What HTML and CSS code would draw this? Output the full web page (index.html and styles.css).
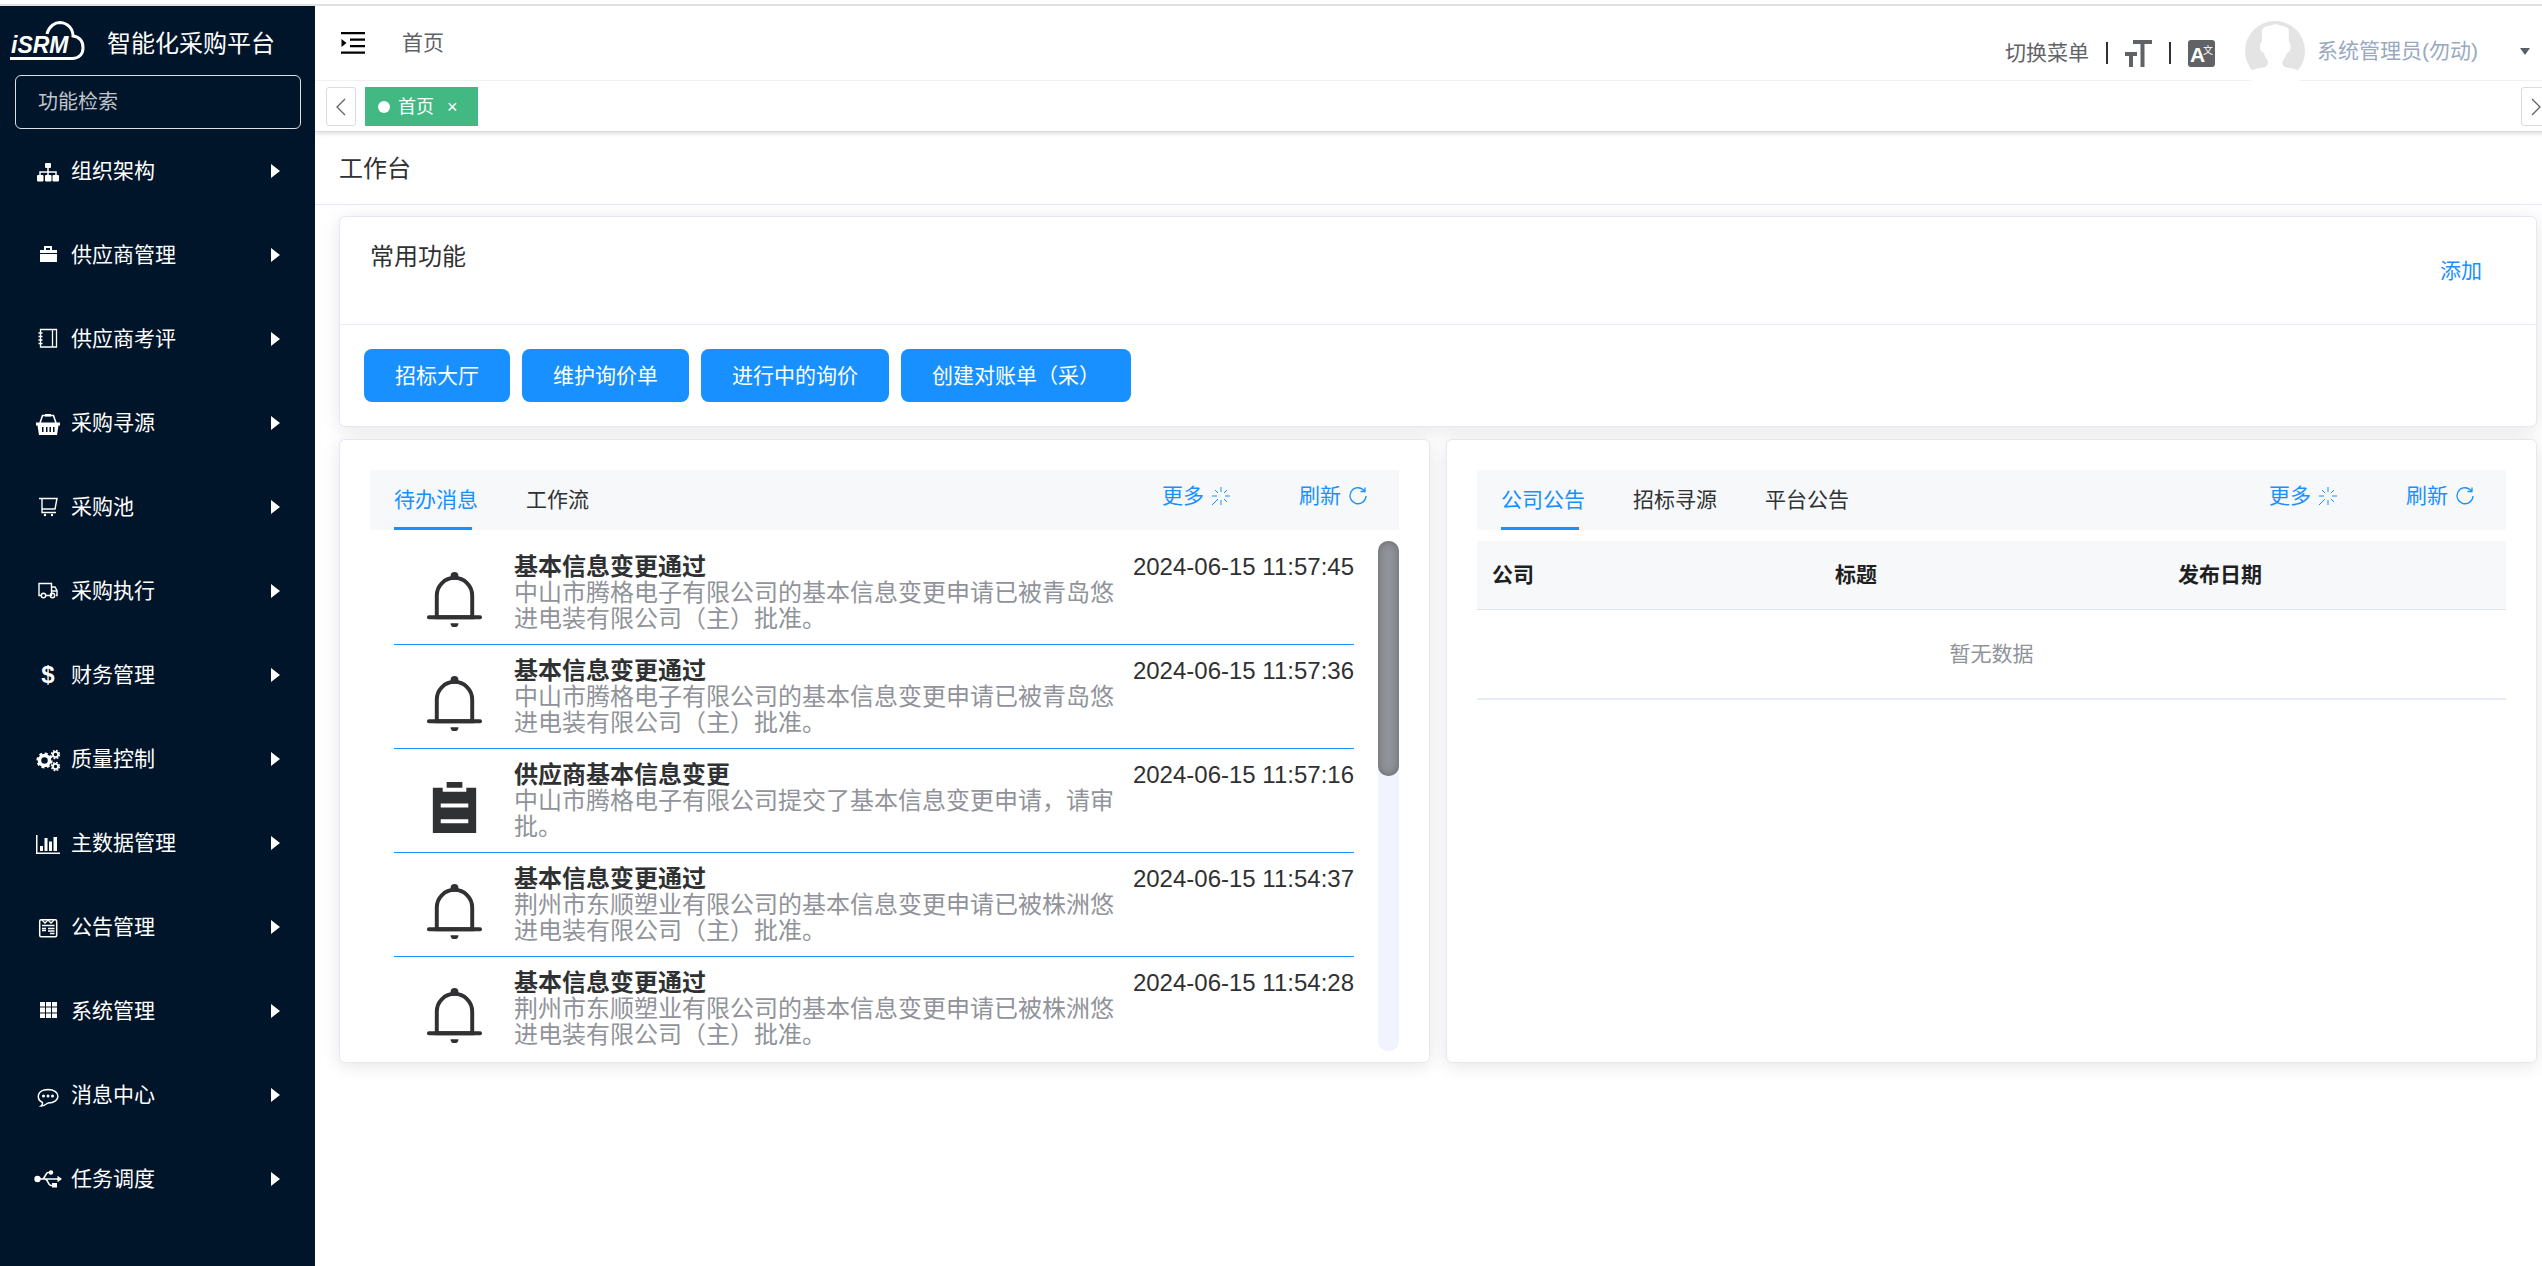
FILE: index.html
```html
<!DOCTYPE html>
<html lang="zh-CN">
<head>
<meta charset="utf-8">
<title>智能化采购平台</title>
<link rel="stylesheet" href="styles.css">
</head>
<body>
<svg class="sprite" aria-hidden="true">
  <symbol id="bell" viewBox="0 0 1024 1024"><path d="M512 64a64 64 0 0 1 64 64v64H448v-64a64 64 0 0 1 64-64z"/><path d="M256 768h512V448a256 256 0 1 0-512 0v320zm256-640a320 320 0 0 1 320 320v384H192V448a320 320 0 0 1 320-320z"/><path d="M96 768h832q32 0 32 32t-32 32H96q-32 0-32-32t32-32zm352 128h128a64 64 0 0 1-128 0z"/></symbol>
  <symbol id="clipboard" viewBox="0 0 1024 1024"><path d="M704 192h160v736H160V192h160v64h384v-64zM288 512h448v-64H288v64zm0 256h448v-64H288v64zm96-576V96h256v96H384z"/></symbol>
  <symbol id="more" viewBox="0 0 20 20"><path d="M10 1v5M10 14v5M1 10h5M14 10h5M4 4l3 3M13 7l3-3M13 13l3 3M1 19l6-6" fill="none" stroke="currentColor"/></symbol>
  <symbol id="refresh" viewBox="0 0 20 20"><path d="M18 10a8 8 0 1 1-3-6.500l2 2M17 1.500v4h-4.500" fill="none" stroke="currentColor" stroke-width="1.300"/></symbol>
</svg>
<div class="topline"></div>
<div class="layout">
  <aside class="sidebar">
    <div class="brand">
      <svg class="logo" viewBox="0 0 75 40"><path d="M37 13C39 5 45 1.500 50 1.500C58 2 63 8 63 15C70 16 73 20 73 27C73 33 69 37.500 62 37.500H0" fill="none" stroke="#fff" stroke-width="3"/><text x="1" y="32" class="logo-text">iSRM</text></svg>
      <span class="brand-name">智能化采购平台</span>
    </div>
    <input class="search" type="text" placeholder="功能检索" aria-label="功能检索">
    <nav>
      <ul class="menu">
        <li><a href="#"><svg viewBox="0 0 28 28"><rect x="11" y="6" width="6" height="5" rx="1"/><path d="M14 11v8M6 19v-4h16v4" fill="none" stroke="currentColor" stroke-width="1.500"/><rect x="3" y="18" width="6.500" height="6.500" rx="1"/><rect x="11" y="18" width="6.500" height="6.500" rx="1"/><rect x="18.500" y="18" width="6.500" height="6.500" rx="1"/></svg><span>组织架构</span><i></i></a></li>
        <li><a href="#"><svg viewBox="0 0 28 28"><path d="M6 12V9h4V5h8v4h5v3zM12 9h4V7h-4zM6 13h17v8H6z"/></svg><span>供应商管理</span><i></i></a></li>
        <li><a href="#"><svg viewBox="0 0 28 28"><path d="M6.500 4.500h16v17.500h-16zM18.500 4.500V22M4.500 8h4M4.500 11.500h4M4.500 15h4M4.500 18.500h4" fill="none" stroke="currentColor" stroke-width="1.300"/></svg><span>供应商考评</span><i></i></a></li>
        <li><a href="#"><svg viewBox="0 0 28 28"><path d="M6 14l2.500-7.500h11L22 14" fill="none" stroke="currentColor" stroke-width="1.600"/><path d="M11 5h6v2.500h-6zM2 13.500h24v3h-1.500L23 26H5L3.500 16.500H2zM8 18v5h1.500v-5zM12 18v5h1.500v-5zM15.500 18v5H17v-5zM19 18v5h1.500v-5z" fill-rule="evenodd"/></svg><span>采购寻源</span><i></i></a></li>
        <li><a href="#"><svg viewBox="0 0 28 28"><path d="M5 5.500h18L21 16H8V5.500M8 16v3.500h14" fill="none" stroke="currentColor" stroke-width="1.400"/><circle cx="11" cy="22" r="1.200"/><circle cx="18" cy="22" r="1.200"/></svg><span>采购池</span><i></i></a></li>
        <li><a href="#"><svg viewBox="0 0 28 28"><path d="M7 18.500H5V6.500h12.500v12H12M17.500 10h3.500l2 3.500v5h-1M18 14h5" fill="none" stroke="currentColor" stroke-width="1.400"/><circle cx="9.500" cy="18.500" r="2.200" fill="none" stroke="currentColor" stroke-width="1.400"/><circle cx="18.500" cy="18.500" r="2.200" fill="none" stroke="currentColor" stroke-width="1.400"/></svg><span>采购执行</span><i></i></a></li>
        <li><a href="#"><b class="dollar">$</b><span>财务管理</span><i></i></a></li>
        <li><a href="#"><svg viewBox="0 0 28 28"><g fill="none" stroke="currentColor"><circle cx="10.500" cy="15.500" r="5" stroke-width="3.500"/><circle cx="10.500" cy="15.500" r="7" stroke-width="2.200" stroke-dasharray="2.900 2.600"/><circle cx="21.500" cy="9.500" r="2.600" stroke-width="1.800"/><circle cx="21.500" cy="9.500" r="4" stroke-width="1.400" stroke-dasharray="1.800 1.340"/><circle cx="21.500" cy="21.500" r="2.600" stroke-width="1.800"/><circle cx="21.500" cy="21.500" r="4" stroke-width="1.400" stroke-dasharray="1.800 1.340"/></g></svg><span>质量控制</span><i></i></a></li>
        <li><a href="#"><svg viewBox="0 0 28 28"><path d="M2 6h1.500v17.500H26V25H2zM6 17h3v5H6zM10.500 9h3v13h-3zM15 12.500h3V22h-3zM19.500 8h3.500v14h-3.500z"/></svg><span>主数据管理</span><i></i></a></li>
        <li><a href="#"><svg viewBox="0 0 28 28"><rect x="5.700" y="6.700" width="17" height="17" rx="1.500" fill="none" stroke="currentColor" stroke-width="1.500"/><path d="M8 7l3 3 3-3 3 3 3-3M8 12.500h12.500M8 15.500h4M14 15.500h6.500M14 18h6.500M16 20.500h4.500M8 17.500h4" fill="none" stroke="currentColor" stroke-width="1.300"/></svg><span>公告管理</span><i></i></a></li>
        <li><a href="#"><svg viewBox="0 0 28 28"><path d="M6 5h5v4.500H6zM12 5h5v4.500h-5zM18 5h5v4.500h-5zM6 10.500h5v5H6zM12 10.500h5v5h-5zM18 10.500h5v5h-5zM6 16.500h5V21H6zM12 16.500h5V21h-5zM18 16.500h5V21h-5z"/></svg><span>系统管理</span><i></i></a></li>
        <li><a href="#"><svg viewBox="0 0 28 28"><path d="M8.500 21.500C2 18 2.500 9 14 8.500c13 0 13.500 13.500 0 13.500q-4 3-7 3 2-1.500 1.500-3.500z" fill="none" stroke="currentColor" stroke-width="1.500"/><circle cx="9.500" cy="15" r="1.500"/><circle cx="14" cy="15" r="1.500"/><circle cx="18.500" cy="15" r="1.500"/></svg><span>消息中心</span><i></i></a></li>
        <li><a href="#"><svg viewBox="0 0 28 28"><circle cx="3.500" cy="14" r="3.200"/><circle cx="17" cy="7.500" r="2.200"/><path d="M18 18h5v4.500h-5zM23.500 10.800L28 14l-4.500 3.200z"/><path d="M4 14h20M8 14c3 0 3.500-6.500 6-6.500h3M11 14c3 0 3 6.500 6 6.500h2" fill="none" stroke="currentColor" stroke-width="1.600"/></svg><span>任务调度</span><i></i></a></li>
      </ul>
    </nav>
  </aside>
  <main class="main">
    <header class="header">
      <div class="crumbs">
        <button class="fold" aria-label="折叠菜单"><svg viewBox="0 0 24 22" width="24" height="22"><path d="M0 0h24v2.300H0zM9 6.500h15v2.300H9zM9 13h15v2.300H9zM0 19.500h24v2.300H0zM.5 7l5 4-5 4z"/></svg></button>
        <span>首页</span>
      </div>
      <div class="tools">
        <a href="#">切换菜单</a>
        <span class="bar"></span>
        <button aria-label="字号"><svg viewBox="0 0 27 27" width="27" height="27"><path d="M8 0h19v4h-7.500v23h-4V4H8zM0 12h12v4H8v11H4V16H0z"/></svg></button>
        <span class="bar"></span>
        <button class="lang" aria-label="语言"><svg viewBox="0 0 27 27" width="27" height="27"><rect width="27" height="27" rx="3"/><text x="2" y="22" class="lang-a">A</text><text x="15" y="14" class="lang-w">文</text></svg></button>
      </div>
      <div class="user">
        <svg viewBox="0 0 60 60" width="60" height="60"><circle cx="30" cy="30" r="30" fill="#e4e4e4"/><path d="M17 20V9Q18 5 26 4.500 31 2 34 4.500 43 5 43.800 9V20.500Q46 22 45.600 27 45 31 42 32 41 36 38 39 36 45 41 46.500 50 47 54 50V60H6V50Q10 47 19 46.500 24 45 22.500 39 19.500 36 19 32 15.500 31 15 27 14.500 22 17 20z" fill="#fff"/></svg>
        <span>系统管理员(勿动)</span>
        <button class="caret" aria-label="用户菜单"></button>
      </div>
    </header>
    <div class="tabs-nav">
      <button class="nav-arrow" aria-label="向左"><svg viewBox="0 0 10 18" width="10" height="18"><path d="M9 1L1 9l8 8"/></svg></button>
      <a class="page-tab" href="#"><span class="dot"></span>首页<span class="close">×</span></a>
      <button class="nav-arrow next" aria-label="向右"><svg viewBox="0 0 10 18" width="10" height="18"><path d="M1 1l8 8-8 8"/></svg></button>
    </div>
    <h1 class="page-title">工作台</h1>
    <div class="content">
      <section class="card">
        <div class="card-head"><h2>常用功能</h2><a href="#">添加</a></div>
        <div class="shortcuts">
          <button>招标大厅</button><button>维护询价单</button><button>进行中的询价</button><button>创建对账单（采）</button>
        </div>
      </section>
      <div class="columns">
        <section class="card panel">
          <div class="panel-tabs">
            <a class="on" href="#">待办消息</a><a href="#">工作流</a>
            <div class="actions"><a href="#">更多<svg><use href="#more"/></svg></a><a href="#">刷新<svg><use href="#refresh"/></svg></a></div>
          </div>
          <div class="scroll">
            <ul class="messages">
              <li><svg><use href="#bell"/></svg><div><h3>基本信息变更通过</h3><p>中山市腾格电子有限公司的基本信息变更申请已被青岛悠进电装有限公司（主）批准。</p></div><time>2024-06-15 11:57:45</time></li>
              <li><svg><use href="#bell"/></svg><div><h3>基本信息变更通过</h3><p>中山市腾格电子有限公司的基本信息变更申请已被青岛悠进电装有限公司（主）批准。</p></div><time>2024-06-15 11:57:36</time></li>
              <li><svg><use href="#clipboard"/></svg><div><h3>供应商基本信息变更</h3><p>中山市腾格电子有限公司提交了基本信息变更申请，请审批。</p></div><time>2024-06-15 11:57:16</time></li>
              <li><svg><use href="#bell"/></svg><div><h3>基本信息变更通过</h3><p>荆州市东顺塑业有限公司的基本信息变更申请已被株洲悠进电装有限公司（主）批准。</p></div><time>2024-06-15 11:54:37</time></li>
              <li><svg><use href="#bell"/></svg><div><h3>基本信息变更通过</h3><p>荆州市东顺塑业有限公司的基本信息变更申请已被株洲悠进电装有限公司（主）批准。</p></div><time>2024-06-15 11:54:28</time></li>
            </ul>
            <div class="track"><div class="thumb"></div></div>
          </div>
        </section>
        <section class="card panel">
          <div class="panel-tabs">
            <a class="on" href="#">公司公告</a><a href="#">招标寻源</a><a href="#">平台公告</a>
            <div class="actions"><a href="#">更多<svg><use href="#more"/></svg></a><a href="#">刷新<svg><use href="#refresh"/></svg></a></div>
          </div>
          <table class="notices">
            <thead><tr><th>公司</th><th>标题</th><th>发布日期</th></tr></thead>
            <tbody><tr><td colspan="3">暂无数据</td></tr></tbody>
          </table>
        </section>
      </div>
    </div>
  </main>
</div>
</body>
</html>
```
FILE: styles.css
```css
* { box-sizing: border-box; }
body {
  margin: 0;
  background: #fff;
  color: #303133;
  font: 21px/32px "Liberation Sans", "Noto Sans CJK SC", sans-serif;
}
a { color: inherit; text-decoration: none; }
ul, h1, h2, h3, p { margin: 0; padding: 0; list-style: none; }
button { margin: 0; padding: 0; border: 0; background: none; color: inherit; font: inherit; }
svg { display: block; flex: none; fill: currentColor; }
.sprite { position: absolute; width: 0; height: 0; }

.topline { height: 6px; border-bottom: 2px solid #e0e0e0; }
.layout { display: flex; min-height: calc(100vh - 6px); }

/* Sidebar */
.sidebar { flex: none; width: 315px; background: #001529; color: #fff; }
.brand { display: flex; align-items: flex-end; gap: 22px; padding: 15px 10px 14px; }
.logo { width: 75px; height: 40px; }
.logo-text { font: italic bold 23px "Liberation Sans", sans-serif; fill: #fff; }
.brand-name { font-size: 24px; line-height: 34px; }
.search {
  display: block;
  width: 286px;
  height: 54px;
  margin: 0 15px;
  padding: 0 22px;
  border: 1px solid #dcdfe6;
  border-radius: 6px;
  background: transparent;
  color: #fff;
  font: inherit;
  font-size: 20px;
}
.search::placeholder { color: #c0c4cc; opacity: 1; }
.menu a { display: flex; align-items: center; gap: 9px; height: 84px; padding: 0 35px 0 34px; }
.menu svg { width: 28px; height: 28px; }
.menu i {
  margin-left: auto;
  border-left: 9px solid #fff;
  border-top: 7px solid transparent;
  border-bottom: 7px solid transparent;
}
.dollar { width: 28px; font-size: 24px; text-align: center; }

/* Header */
.main { flex: 1; min-width: 0; overflow: hidden; }
.header { display: flex; height: 75px; border-bottom: 1px solid #f4f4f5; }
.crumbs { display: flex; align-items: center; gap: 37px; padding-left: 26px; color: #606266; }
.fold { color: #000; }
.tools { display: flex; align-items: center; gap: 17px; margin-left: auto; padding: 20px 30px 0 0; color: #606266; }
.bar { width: 2px; height: 22px; background: #303133; }
.lang-a { font: bold 21px "Liberation Sans", sans-serif; fill: #fff; }
.lang-w { font: 10px "Noto Sans CJK SC", sans-serif; fill: #fff; }
.user { display: flex; align-items: center; gap: 12px; height: 60px; margin-top: 15px; padding-right: 12px; color: #99a9bf; }
.caret {
  margin-left: 30px;
  border-top: 7px solid #5a5e66;
  border-left: 5px solid transparent;
  border-right: 5px solid transparent;
}

.tabs-nav {
  display: flex;
  gap: 9px;
  height: 51px;
  margin-right: -9px;
  padding: 6px 0 0 11px;
  border-bottom: 1px solid #d8dce5;
  box-shadow: 0 2px 4px rgba(0, 0, 0, .12);
}
.nav-arrow {
  display: flex;
  align-items: center;
  justify-content: center;
  width: 30px;
  height: 39px;
  border: 1px solid #d8dce5;
  border-radius: 3px;
}
.nav-arrow svg { fill: none; stroke: #606266; stroke-width: 1.3; }
.next { margin-left: auto; }
.page-tab { display: flex; align-items: center; height: 39px; padding: 0 20px 0 13px; background: #42b983; color: #fff; font-size: 18px; }
.dot { width: 12px; height: 12px; margin-right: 8px; border-radius: 50%; background: #fff; }
.close { margin-left: 13px; }
.page-title { height: 73px; padding-left: 24px; border-bottom: 1px solid #e6e9f2; font-size: 24px; font-weight: 400; line-height: 73px; }

/* Cards */
.content { display: flex; flex-direction: column; gap: 12px; padding: 11px 5px 24px 24px; }
.card { border: 1px solid #e4e8f5; border-radius: 6px; background: #fff; box-shadow: 0 3px 18px rgba(0, 0, 0, .1); }
.card-head { display: flex; justify-content: space-between; padding: 24px 30px; border-bottom: 1px solid #e6ebf5; }
.card-head h2 { font-size: 24px; font-weight: 400; line-height: 32px; }
.card-head a { padding-right: 24px; color: #1890ff; line-height: 59px; }
.shortcuts { display: flex; gap: 12px; padding: 24px; }
.shortcuts button { height: 53px; padding: 0 31px; border-radius: 8px; background: #1890ff; color: #fff; }
.columns { display: grid; grid-template-columns: 1fr 1fr; gap: 16px; }
.panel { min-width: 0; padding: 30px 30px 11px; }
.panel-tabs { display: flex; gap: 48px; height: 60px; margin-bottom: 11px; padding: 0 31px 0 24px; background: #f6f8fa; line-height: 60px; }
.on { color: #1890ff; background: linear-gradient(#1890ff, #1890ff) 0 100% / 78px 3px no-repeat; }
.actions { display: flex; gap: 68px; margin-left: auto; color: #1890ff; line-height: 52px; }
.actions a { display: flex; gap: 7px; }
.actions svg { width: 20px; height: 20px; margin-top: 16px; }

.scroll { display: flex; justify-content: space-between; height: 510px; overflow: hidden; }
.messages { flex: 1; margin: 0 24px; }
.messages li { display: grid; grid-template-columns: 120px 1fr auto; height: 104px; padding-top: 13px; border-bottom: 1px solid #1890ff; font-size: 24px; line-height: 26px; }
.messages svg { width: 63px; height: 63px; margin: 14px auto 0; }
.messages h3 { font-size: 24px; }
.messages p { color: #909399; }
.track { width: 21px; border-radius: 10px; background: #f1f4fe; }
.thumb { height: 46%; border-radius: 10px; background: #909399; box-shadow: inset 0 0 9px rgba(0, 0, 0, .3); }

.notices { width: 100%; border-collapse: separate; border-spacing: 0; table-layout: fixed; }
.notices th { height: 69px; padding: 0 15px; border-bottom: 1px solid #dfe3ea; background: #f6f8fa; color: #1f1f1f; text-align: left; }
.notices td { height: 90px; padding: 0; border-bottom: 2px solid #e6ebf5; color: #909399; text-align: center; }
```
